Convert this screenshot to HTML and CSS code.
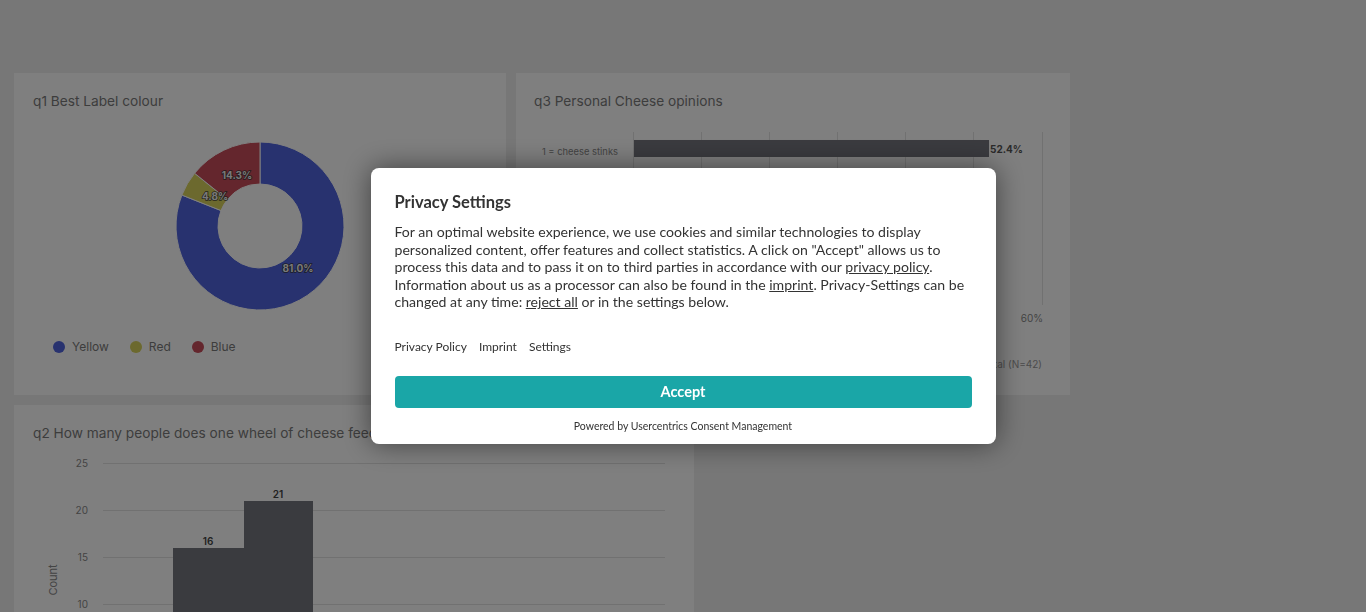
FILE: index.html
```html
<!DOCTYPE html>
<html lang="en">
<head>
<meta charset="utf-8">
<title>Survey results</title>
<link rel="stylesheet" href="styles.css">
</head>
<body>
<main class="dashboard">
  <div class="row">
    <section class="card card-q1">
      <h2 class="card-title">q1 Best Label colour</h2>
      <div class="donut-wrap">
        <svg class="donut" width="180" height="180" viewBox="0 0 180 180">
          <path class="seg-blue" d="M90,6 A84,84 0 1 1 11.90,59.08 L50.95,74.54 A42,42 0 1 0 90,48 Z"/>
          <path class="seg-yellow" d="M11.90,59.08 A84,84 0 0 1 24.63,37.25 L57.32,63.62 A42,42 0 0 0 50.95,74.54 Z"/>
          <path class="seg-red" d="M24.63,37.25 A84,84 0 0 1 90,6 L90,48 A42,42 0 0 0 57.32,63.62 Z"/>
          <text class="donut-label" x="128" y="135.5">81.0%</text>
          <text class="donut-label" x="45" y="63.5">4.8%</text>
          <text class="donut-label" x="67" y="42.5">14.3%</text>
        </svg>
      </div>
      <ul class="legend">
        <li class="legend-item"><span class="dot dot-blue"></span>Yellow</li>
        <li class="legend-item"><span class="dot dot-yellow"></span>Red</li>
        <li class="legend-item"><span class="dot dot-red"></span>Blue</li>
      </ul>
    </section>
    <section class="card card-q3">
      <h2 class="card-title">q3 Personal Cheese opinions</h2>
      <svg class="hbar" width="554" height="300" viewBox="0 0 554 300">
        <g class="grid">
          <line x1="117.5" y1="59" x2="117.5" y2="232"/>
          <line x1="185.5" y1="59" x2="185.5" y2="232"/>
          <line x1="253.5" y1="59" x2="253.5" y2="232"/>
          <line x1="321.5" y1="59" x2="321.5" y2="232"/>
          <line x1="389.5" y1="59" x2="389.5" y2="232"/>
          <line x1="457.5" y1="59" x2="457.5" y2="232"/>
          <line x1="526.5" y1="59" x2="526.5" y2="232"/>
        </g>
        <text class="cat-label" x="102" y="82">1 = cheese stinks</text>
        <rect class="bar" x="118" y="67" width="355" height="17"/>
        <text class="bar-value" x="474" y="80">52.4%</text>
        <rect class="bar" x="118" y="101" width="97" height="17"/>
        <rect class="bar" x="118" y="135" width="130" height="17"/>
        <rect class="bar" x="118" y="169" width="49" height="17"/>
        <rect class="bar" x="118" y="203" width="16" height="17"/>
        <text class="tick" x="516" y="249">60%</text>
        <text class="axis-note" x="526" y="295">Total (N=42)</text>
      </svg>
    </section>
  </div>
  <div class="row">
    <section class="card card-q2">
      <h2 class="card-title">q2 How many people does one wheel of cheese feed?</h2>
      <svg class="vbar" width="680" height="330" viewBox="0 0 680 330">
        <g class="grid">
          <line x1="89" y1="58.5" x2="651" y2="58.5"/>
          <line x1="89" y1="105.5" x2="651" y2="105.5"/>
          <line x1="89" y1="152.5" x2="651" y2="152.5"/>
          <line x1="89" y1="199.5" x2="651" y2="199.5"/>
          <line x1="89" y1="246.5" x2="651" y2="246.5"/>
          <line x1="89" y1="293.5" x2="651" y2="293.5"/>
        </g>
        <g class="yticks">
          <text x="74" y="62">25</text>
          <text x="74" y="109">20</text>
          <text x="74" y="156">15</text>
          <text x="74" y="203">10</text>
          <text x="74" y="250">5</text>
          <text x="74" y="297">0</text>
        </g>
        <text class="y-title" transform="translate(43,175) rotate(-90)">Count</text>
        <rect class="bar" x="159" y="143" width="71" height="150"/>
        <rect class="bar" x="230" y="96" width="69" height="197"/>
        <rect class="bar" x="299" y="256" width="69" height="37"/>
        <rect class="bar" x="368" y="284" width="69" height="9"/>
        <text class="col-value" x="194" y="140">16</text>
        <text class="col-value" x="264" y="93">21</text>
      </svg>
    </section>
  </div>
</main>

<div class="consent-overlay">
  <div class="consent" role="dialog" aria-labelledby="consent-title">
    <h1 class="consent-title" id="consent-title">Privacy Settings</h1>
    <p class="consent-text">For an optimal website experience, we use cookies and similar technologies to display personalized content, offer features and collect statistics. A click on "Accept" allows us to process this data and to pass it on to third parties in accordance with our <a href="#">privacy policy</a>. Information about us as a processor can also be found in the <a href="#">imprint</a>. Privacy-Settings can be changed at any time: <a href="#">reject all</a> or in the settings below.</p>
    <nav class="consent-links">
      <a href="#">Privacy Policy</a>
      <a href="#">Imprint</a>
      <a href="#">Settings</a>
    </nav>
    <button class="consent-accept" type="button">Accept</button>
    <p class="consent-powered">Powered by Usercentrics Consent Management</p>
  </div>
</div>
</body>
</html>
```
FILE: styles.css
```css
* { box-sizing: border-box; }

html, body {
  margin: 0;
  padding: 0;
  height: 100%;
  overflow: hidden;
}

body {
  background: #eeeeee;
  font-family: Inter, "Liberation Sans", sans-serif;
  color: #555;
}

.dashboard {
  padding: 73px 14px 0 14px;
  display: flex;
  flex-direction: column;
  gap: 10px;
}

.row {
  display: flex;
  gap: 10px;
}

.card {
  background: #ffffff;
  height: 322px;
  position: relative;
}

.card-q1 { width: 492px; }
.card-q3 { width: 554px; }
.card-q2 { width: 680px; height: 400px; }

.card-title {
  margin: 0;
  padding: 19px 0 0 19px;
  font-size: 13.7px;
  line-height: 18px;
  font-weight: 400;
  color: #7a7a7a;
}

.card-q3 .card-title { padding-left: 18px; }

/* donut */
.donut-wrap {
  display: flex;
  justify-content: center;
  margin-top: 26px;
}

.seg-blue { fill: #5064df; stroke: #fff; stroke-width: 1; }
.seg-yellow { fill: #d8d25c; stroke: #fff; stroke-width: 1; }
.seg-red { fill: #c84c5a; stroke: #fff; stroke-width: 1; }

.donut-label {
  font-family: Inter, "Liberation Sans", sans-serif;
  font-size: 10px;
  font-weight: 700;
  fill: #f2f2f2;
  text-anchor: middle;
  paint-order: stroke;
  stroke: rgba(50, 50, 50, 0.85);
  stroke-width: 1.6px;
}

.legend {
  list-style: none;
  margin: 23px 0 0 39px;
  padding: 0;
  display: flex;
  gap: 21px;
}

.legend-item {
  display: flex;
  align-items: center;
  gap: 7px;
  font-size: 12px;
  color: #7a7a7a;
}

.dot {
  width: 12px;
  height: 12px;
  border-radius: 50%;
  display: inline-block;
}
.dot-blue { background: #5064df; }
.dot-yellow { background: #d8d25c; }
.dot-red { background: #c84c5a; }

/* horizontal bar chart */
.hbar {
  position: absolute;
  left: 0;
  top: 0;
}

.grid line {
  stroke: #e2e2e2;
  stroke-width: 1;
}

.bar { fill: #75767e; }

.cat-label {
  font-size: 9.4px;
  fill: #888;
  text-anchor: end;
}

.bar-value {
  font-size: 10px;
  font-weight: 700;
  fill: #555;
}

.tick {
  font-size: 10px;
  fill: #888;
  text-anchor: middle;
}

.axis-note {
  font-size: 10px;
  fill: #999;
  text-anchor: end;
}

/* vertical bar chart */
.vbar {
  position: absolute;
  left: 0;
  top: 0;
}

.yticks text {
  font-size: 10px;
  fill: #888;
  text-anchor: end;
}

.y-title {
  font-size: 11px;
  fill: #888;
  text-anchor: middle;
}

.col-value {
  font-size: 10px;
  font-weight: 600;
  fill: #444;
  text-anchor: middle;
}

/* consent */
.consent-overlay {
  position: fixed;
  inset: 0;
  background: rgba(0, 0, 0, 0.5);
  display: flex;
  align-items: center;
  justify-content: center;
}

.consent {
  width: 625px;
  background: #ffffff;
  border-radius: 8px;
  padding: 24px 24px 11px 24px;
  box-shadow: 0 0 28px rgba(0, 0, 0, 0.5);
  font-family: Lato, "Liberation Sans", sans-serif;
  color: #333;
}

.consent-title {
  margin: 0;
  font-size: 16.5px;
  line-height: 20px;
  font-weight: 700;
  color: #333;
}

.consent-text {
  margin: 11px 0 0 0;
  font-size: 14.1px;
  line-height: 17.5px;
  color: #333;
}

.consent-text a {
  color: #333;
  text-decoration: underline;
}

.consent-links {
  display: flex;
  gap: 12px;
  margin-top: 28px;
  font-size: 12px;
  line-height: 16px;
}

.consent-links a {
  color: #333;
  text-decoration: none;
}

.consent-accept {
  display: block;
  width: 100%;
  height: 32px;
  margin-top: 21px;
  border: 0;
  border-radius: 4px;
  background: #1aa6a7;
  color: #fff;
  font-family: Lato, "Liberation Sans", sans-serif;
  font-size: 14.5px;
  font-weight: 700;
}

.consent-powered {
  margin: 11px 0 0 0;
  text-align: center;
  font-size: 10.5px;
  line-height: 14px;
  color: #333;
}
```
